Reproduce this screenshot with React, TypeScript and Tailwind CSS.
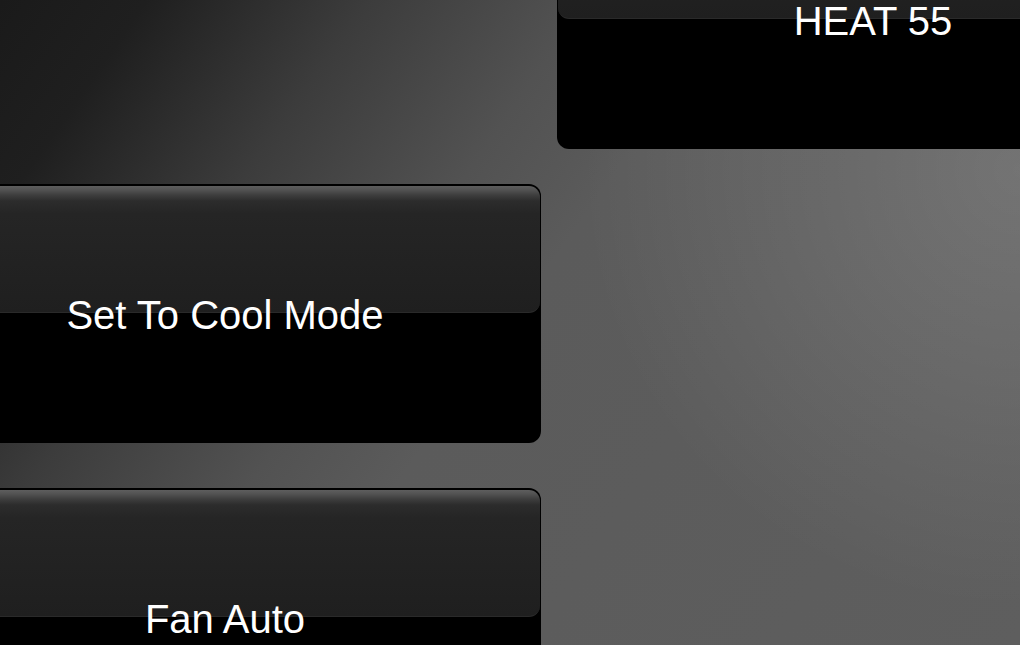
import React from 'react';

type GlossButtonProps = {
    label: string;
};

function GlossButton({ label }: GlossButtonProps) {
    return (
        <button className="relative flex flex-col justify-start w-[632px] h-[259px] shrink-0 rounded-[12px] bg-black overflow-hidden pt-[2px] px-px">
            {/* Gloss top half */}
            <div className="h-[127px] w-full shrink-0 rounded-[11px] border-b border-[#2a2a2a] bg-[linear-gradient(to_bottom,#5e5e5e_0px,#525252_4px,#3e3e3e_9px,#2c2c2c_15px,#252525_28px,#1f1f1f_100%)]" />
            {/* Label */}
            <span className="absolute inset-0 flex items-center justify-center pt-[3px] text-[40px] text-white font-['Liberation_Sans',Arial,sans-serif] leading-normal whitespace-nowrap">
                {label}
            </span>
        </button>
    );
}

export default function App() {
    return (
        <div className="h-screen w-full overflow-hidden flex gap-[16px] bg-[radial-gradient(circle_440px_at_100%_170px,rgba(255,255,255,0.14),rgba(255,255,255,0)),linear-gradient(125deg,#1a1a1a_0%,#1f1f1f_10%,#3c3c3c_25%,#525252_40%,#5b5b5b_50%,#5e5e5e_100%)]">
            <div className="flex flex-col gap-[45px] shrink-0 ml-[-91px] pt-[184px]">
                <GlossButton label="Set To Cool Mode" />
                <GlossButton label="Fan Auto" />
            </div>
            <div className="flex flex-col gap-[45px] shrink-0 mt-[-110px]">
                <GlossButton label="HEAT 55" />
            </div>
        </div>
    );
}
